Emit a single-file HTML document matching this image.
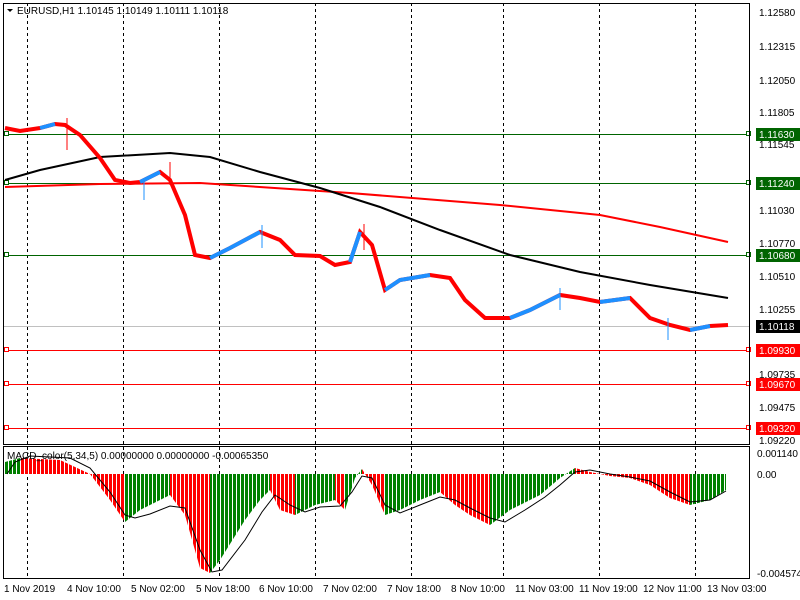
<!DOCTYPE html>
<html><head><meta charset="utf-8"><style>
html,body{margin:0;padding:0;background:#fff;width:800px;height:600px;overflow:hidden}
svg{display:block;font-family:"Liberation Sans","DejaVu Sans",sans-serif;font-size:10px}
</style></head><body>
<svg width="800" height="600" xmlns="http://www.w3.org/2000/svg">
<defs>
<pattern id="pg" patternUnits="userSpaceOnUse" x="5" y="0" width="4" height="10"><rect x="0" y="0" width="3" height="10" fill="#008000"/></pattern>
<pattern id="pr" patternUnits="userSpaceOnUse" x="5" y="0" width="4" height="10"><rect x="0" y="0" width="3" height="10" fill="#ff0000"/></pattern>
<clipPath id="cr"><rect x="20" y="440" width="105" height="140"/><rect x="170" y="440" width="40" height="140"/><rect x="270" y="440" width="25" height="140"/><rect x="335" y="440" width="10" height="140"/><rect x="362" y="440" width="23" height="140"/><rect x="440" y="440" width="50" height="140"/><rect x="575" y="440" width="115" height="140"/></clipPath>
<clipPath id="cg"><rect x="0" y="440" width="20" height="140"/><rect x="125" y="440" width="45" height="140"/><rect x="210" y="440" width="60" height="140"/><rect x="295" y="440" width="40" height="140"/><rect x="345" y="440" width="17" height="140"/><rect x="385" y="440" width="55" height="140"/><rect x="490" y="440" width="85" height="140"/><rect x="690" y="440" width="40" height="140"/></clipPath>
</defs>
<rect x="0" y="0" width="800" height="600" fill="#fff"/>
<g stroke="#000" stroke-dasharray="3,3">
<line x1="27.5" y1="3" x2="27.5" y2="578"/><line x1="123.5" y1="3" x2="123.5" y2="578"/><line x1="219.5" y1="3" x2="219.5" y2="578"/><line x1="315.5" y1="3" x2="315.5" y2="578"/><line x1="411.5" y1="3" x2="411.5" y2="578"/><line x1="503.5" y1="3" x2="503.5" y2="578"/><line x1="599.5" y1="3" x2="599.5" y2="578"/><line x1="695.5" y1="3" x2="695.5" y2="578"/>
</g>
<line x1="3" y1="326.5" x2="749" y2="326.5" stroke="#c0c0c0"/>
<g stroke="#006400" fill="#fff">
<line x1="3" y1="134.5" x2="749" y2="134.5"/><line x1="3" y1="183.5" x2="749" y2="183.5"/><line x1="3" y1="255.5" x2="749" y2="255.5"/>
<rect x="4.5" y="131.5" width="4" height="4"/><rect x="4.5" y="180.5" width="4" height="4"/><rect x="4.5" y="252.5" width="4" height="4"/>
<rect x="746.5" y="131.5" width="4" height="4"/><rect x="746.5" y="180.5" width="4" height="4"/><rect x="746.5" y="252.5" width="4" height="4"/>
</g>
<g stroke="#ff0000" fill="#fff">
<line x1="3" y1="350.5" x2="749" y2="350.5"/><line x1="3" y1="384.5" x2="749" y2="384.5"/><line x1="3" y1="428.5" x2="749" y2="428.5"/>
<rect x="4.5" y="347.5" width="4" height="4"/><rect x="4.5" y="381.5" width="4" height="4"/><rect x="4.5" y="425.5" width="4" height="4"/>
<rect x="746.5" y="347.5" width="4" height="4"/><rect x="746.5" y="381.5" width="4" height="4"/><rect x="746.5" y="425.5" width="4" height="4"/>
</g>
<polyline points="5,187 100,184 200,183 350,193 500,205 600,215 660,227 728,242" fill="none" stroke="#ff0000" stroke-width="2"/>
<polyline points="5,180 40,170 100,157 170,153 210,157 260,172 320,188 380,207 440,230 510,255 580,272 650,285 728,298" fill="none" stroke="#000" stroke-width="2"/>
<polyline points="5,128 20,131 40,128 55,124 65,125 80,135 100,158 115,180 130,183 140,182 160,172 170,180 185,215 195,255 210,258 230,248 260,232 280,240 295,255 320,256 335,265 350,262 360,232 372,245 385,290 400,280 430,275 450,278 465,300 485,318 510,318 530,310 560,295 580,298 600,302 630,298 650,318 670,325 690,330 710,326 728,325" fill="none" stroke="#ff0000" stroke-width="4"/>
<g fill="none" stroke="#1e90ff" stroke-width="4">
<polyline points="40,128 55,124"/><polyline points="140,182 160,172"/><polyline points="210,258 230,248 260,232"/><polyline points="350,262 360,232"/><polyline points="385,290 400,280 430,275"/><polyline points="510,318 530,310 560,295"/><polyline points="600,302 630,298"/><polyline points="690,330 710,326"/>
</g>
<g stroke-width="1">
<line x1="67" y1="118" x2="67" y2="150" stroke="#ff0000"/><line x1="144" y1="178" x2="144" y2="200" stroke="#1e90ff"/><line x1="170" y1="162" x2="170" y2="185" stroke="#ff0000"/><line x1="262" y1="225" x2="262" y2="248" stroke="#1e90ff"/><line x1="364" y1="224" x2="364" y2="250" stroke="#ff0000"/><line x1="668" y1="318" x2="668" y2="340" stroke="#1e90ff"/><line x1="560" y1="288" x2="560" y2="310" stroke="#1e90ff"/>
</g>
<rect x="3.5" y="3.5" width="746" height="441" fill="none" stroke="#000"/>
<rect x="3.5" y="446.5" width="746" height="132" fill="none" stroke="#000"/>
<g>
<polygon clip-path="url(#cg)" fill="url(#pg)" points="5,474 5,462 20,458 60,460 90,474 110,500 125,522 140,510 170,495 185,515 200,568 210,573 220,560 245,520 260,500 270,490 280,510 295,515 305,510 315,505 335,500 345,510 355,478 362,469 372,485 385,515 400,510 420,500 440,492 455,505 470,515 490,525 510,510 540,495 560,478 575,468 590,472 610,476 630,478 650,485 670,498 690,505 710,500 726,490 726,474"/>
<polygon clip-path="url(#cr)" fill="url(#pr)" points="5,474 5,462 20,458 60,460 90,474 110,500 125,522 140,510 170,495 185,515 200,568 210,573 220,560 245,520 260,500 270,490 280,510 295,515 305,510 315,505 335,500 345,510 355,478 362,469 372,485 385,515 400,510 420,500 440,492 455,505 470,515 490,525 510,510 540,495 560,478 575,468 590,472 610,476 630,478 650,485 670,498 690,505 710,500 726,490 726,474"/>
</g>
<polyline points="7,474 15,462 30,456 70,458 90,468 110,492 125,515 135,518 150,514 170,506 185,508 200,550 212,572 222,570 245,540 262,512 275,495 290,505 305,512 320,507 340,506 352,492 362,476 372,478 385,505 400,513 420,505 440,497 455,500 470,508 490,518 505,522 525,510 545,497 560,485 575,472 590,470 610,474 630,477 650,481 670,492 690,502 710,500 726,491" fill="none" stroke="#000"/>
<path d="M7 9 L13 9 L10 12 Z" fill="#000"/>
<text x="17" y="14" fill="#000">EURUSD,H1  1.10145 1.10149 1.10111 1.10118</text>
<text x="7" y="459" fill="#000">MACD_color(5,34,5) 0.00000000 0.00000000 -0.00065350</text>
<g fill="#000">
<text x="759" y="16">1.12580</text><text x="759" y="50">1.12315</text><text x="759" y="84">1.12050</text><text x="759" y="116">1.11805</text><text x="759" y="148">1.11545</text><text x="759" y="214">1.11030</text><text x="759" y="247">1.10770</text><text x="759" y="280">1.10510</text><text x="759" y="313">1.10255</text><text x="759" y="378">1.09735</text><text x="759" y="411">1.09475</text><text x="759" y="444">1.09220</text>
<text x="757" y="457">0.001140</text><text x="757" y="478">0.00</text><text x="757" y="577">-0.004574</text>
</g>
<g>
<rect x="756" y="128" width="44" height="13" fill="#006400"/><rect x="756" y="177" width="44" height="13" fill="#006400"/><rect x="756" y="249" width="44" height="13" fill="#006400"/>
<rect x="756" y="320" width="44" height="13" fill="#000"/>
<rect x="756" y="344" width="44" height="13" fill="#ff0000"/><rect x="756" y="378" width="44" height="13" fill="#ff0000"/><rect x="756" y="422" width="44" height="13" fill="#ff0000"/>
</g>
<g fill="#fff">
<text x="759" y="138">1.11630</text><text x="759" y="187">1.11240</text><text x="759" y="259">1.10680</text><text x="759" y="330">1.10118</text><text x="759" y="354">1.09930</text><text x="759" y="388">1.09670</text><text x="759" y="432">1.09320</text>
</g>
<g fill="#000">
<text x="4" y="592">1 Nov 2019</text><text x="67" y="592">4 Nov 10:00</text><text x="131" y="592">5 Nov 02:00</text><text x="196" y="592">5 Nov 18:00</text><text x="259" y="592">6 Nov 10:00</text><text x="323" y="592">7 Nov 02:00</text><text x="387" y="592">7 Nov 18:00</text><text x="451" y="592">8 Nov 10:00</text><text x="515" y="592">11 Nov 03:00</text><text x="579" y="592">11 Nov 19:00</text><text x="643" y="592">12 Nov 11:00</text><text x="707" y="592">13 Nov 03:00</text>
</g>
</svg>
</body></html>
